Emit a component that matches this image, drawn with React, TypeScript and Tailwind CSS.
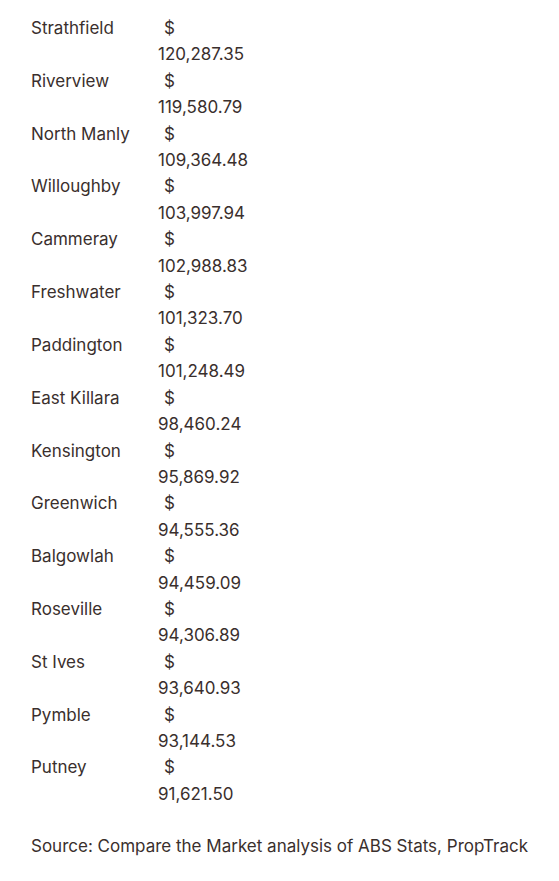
import React from "react";

const rows: [string, string][] = [
  ["Strathfield", "120,287.35"],
  ["Riverview", "119,580.79"],
  ["North Manly", "109,364.48"],
  ["Willoughby", "103,997.94"],
  ["Cammeray", "102,988.83"],
  ["Freshwater", "101,323.70"],
  ["Paddington", "101,248.49"],
  ["East Killara", "98,460.24"],
  ["Kensington", "95,869.92"],
  ["Greenwich", "94,555.36"],
  ["Balgowlah", "94,459.09"],
  ["Roseville", "94,306.89"],
  ["St Ives", "93,640.93"],
  ["Pymble", "93,144.53"],
  ["Putney", "91,621.50"],
];

export default function App() {
  return (
    <div
      className="min-h-[881px] w-[559px] bg-white pl-[31px] pt-[15px] text-[17px] leading-[26.4px] text-[#3a2f2d]"
      style={{ fontFamily: "Inter, sans-serif" }}
    >
      <div className="grid grid-cols-[127px_auto]">
        {rows.map(([name, val]) => (
          <React.Fragment key={name}>
            <div>{name}</div>
            <div>
              <div className="pl-[6px]">$</div>
              <div>{val}</div>
            </div>
          </React.Fragment>
        ))}
      </div>
      <p className="mt-[26px]">Source: Compare the Market analysis of ABS Stats, PropTrack</p>
    </div>
  );
}
